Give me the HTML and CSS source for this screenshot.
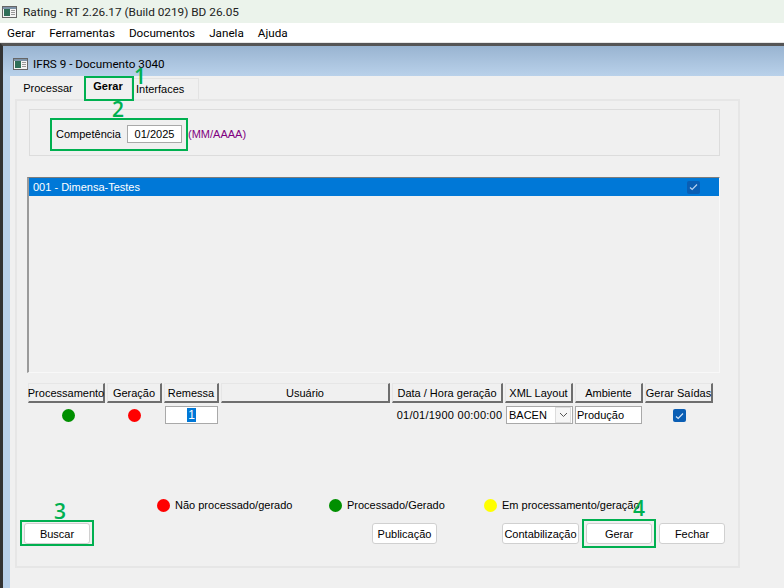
FILE: index.html
```html
<!DOCTYPE html>
<html lang="pt">
<head>
<meta charset="utf-8">
<title>Rating</title>
<link rel="stylesheet" href="styles.css">
</head>
<body>
<header class="titlebar">
  <svg class="appicon" width="15" height="12" viewBox="0 0 15 12"><rect x="0.5" y="0.5" width="14" height="11" fill="#f4f4f4" stroke="#666"/><rect x="1" y="1" width="13" height="2" fill="#7d93a8"/><rect x="2" y="3" width="6" height="7" fill="#2f6f58"/><rect x="9" y="4" width="4" height="1" fill="#999"/><rect x="9" y="6" width="4" height="1" fill="#999"/><rect x="9" y="8" width="4" height="1" fill="#999"/></svg>
  <span>Rating - RT 2.26.17 (Build 0219) BD 26.05</span>
</header>
<nav class="menubar">
  <span>Gerar</span><span>Ferramentas</span><span>Documentos</span><span>Janela</span><span>Ajuda</span>
</nav>
<main class="mdi">
  <section class="window">
    <div class="wintitle">
      <svg class="appicon" width="15" height="12" viewBox="0 0 15 12"><rect x="0.5" y="0.5" width="14" height="11" fill="#f4f4f4" stroke="#666"/><rect x="1" y="1" width="13" height="2" fill="#7d93a8"/><rect x="2" y="3" width="6" height="7" fill="#2f6f58"/><rect x="9" y="4" width="4" height="1" fill="#999"/><rect x="9" y="6" width="4" height="1" fill="#999"/><rect x="9" y="8" width="4" height="1" fill="#999"/></svg>
      <span>IFRS 9 - Documento 3040</span>
    </div>
    <div class="winbody">
      <div class="tabs">
        <span class="tab first">Processar</span>
        <span class="tab active">Gerar</span>
        <span class="tab last">Interfaces</span>
      </div>
      <div class="panel">
        <div class="group">
          <span class="complabel">Competência</span>
          <span class="input compinput">01/2025</span>
          <span class="hint">(MM/AAAA)</span>
        </div>
        <div class="list">
          <div class="listrow">
            <span>001 - Dimensa-Testes</span>
            <span class="listcheck"><svg width="9" height="8" viewBox="0 0 9 8"><path d="M1 4.5 3.2 6.5 8 1.5" fill="none" stroke="#b9d2ee" stroke-width="1.2"/></svg></span>
          </div>
        </div>
        <div class="grid">
          <span class="th">Processamento</span>
          <span class="th">Geração</span>
          <span class="th">Remessa</span>
          <span class="th">Usuário</span>
          <span class="th">Data / Hora geração</span>
          <span class="th">XML Layout</span>
          <span class="th">Ambiente</span>
          <span class="th">Gerar Saídas</span>
          <span class="td"><i class="dot green procdot"></i></span>
          <span class="td"><i class="dot red"></i></span>
          <span class="td"><span class="input remessa"><b>1</b></span></span>
          <span class="td"></span>
          <span class="td date">01/01/1900 00:00:00</span>
          <span class="td end"><span class="input combo"><span>BACEN</span><span class="arrow"><svg width="9" height="6" viewBox="0 0 9 6"><path d="M1 1 4.5 4.5 8 1" fill="none" stroke="#555" stroke-width="1"/></svg></span></span></span>
          <span class="td start"><span class="input ambiente">Produção</span></span>
          <span class="td"><span class="check"><svg width="9" height="8" viewBox="0 0 9 8"><path d="M1 4.5 3.2 6.5 8 1.5" fill="none" stroke="#d5e6f8" stroke-width="1.2"/></svg></span></span>
        </div>
        <div class="legend">
          <span class="legitem first"><i class="dot red"></i>Não processado/gerado</span>
          <span class="legitem"><i class="dot green"></i>Processado/Gerado</span>
          <span class="legitem"><i class="dot yellow"></i>Em processamento/geração</span>
        </div>
        <div class="actions">
          <button class="btn buscar">Buscar</button>
          <button class="btn publicacao">Publicação</button>
          <button class="btn contab">Contabilização</button>
          <button class="btn gerar">Gerar</button>
          <button class="btn fechar">Fechar</button>
        </div>
      </div>
    </div>
  </section>
  <span class="mark box1"></span><span class="num n1">1</span>
  <span class="mark box2"></span><span class="num n2">2</span>
  <span class="mark box3"></span><span class="num n3">3</span>
  <span class="mark box4"></span><span class="num n4">4</span>
</main>
</body>
</html>
```
FILE: styles.css
```css
* { box-sizing: border-box; }
html, body { margin: 0; padding: 0; }
body {
  width: 784px; height: 588px; overflow: hidden; background: #f0f0f0;
  font-family: "Liberation Sans", Arial, sans-serif; font-size: 11px; color: #000;
}
.appicon { flex: none; }
.titlebar {
  height: 23px; background: #ebf3eb; display: flex; align-items: center; gap: 6px; padding-left: 2px;
  font-family: Roboto, sans-serif; font-size: 11.8px; color: #222;
}
.menubar {
  height: 19px; background: #fff; display: flex; align-items: center; gap: 14px; padding-left: 7px;
  font-family: Roboto, sans-serif; font-size: 11.7px;
}
.mdi {
  position: relative; height: 546px; background: #f0f0f0;
  border-top: 1px solid #e6e6e6;
}
.window { height: 545px; border-top: 3px solid #555; border-left: 3px solid #333; background: #b9d1ea; padding-left: 7px; }
.wintitle {
  height: 30px; margin-left: -7px; padding: 5px 0 0 10px; display: flex; align-items: center; gap: 5px;
  background: linear-gradient(#99b4d1, #b9d1ea);
  font-family: Roboto, sans-serif; font-size: 11.7px;
}
.winbody { background: #f0f0f0; height: 512px; padding: 0 0 0 5px; }
.tabs { height: 23px; display: flex; align-items: flex-end; }
.tab { height: 21px; padding-top: 4px; text-align: center; }
.tab.first { width: 66px; }
.tab.active { width: 50px; font-weight: bold; padding: 2px 0 0 4px; }
.tab.last { width: 68px; border: 1px solid #e3e3e3; border-bottom: 0; background: #f0f0f0; padding: 4px 0 0 4px; text-align: left; }
.panel {
  width: 725px; height: 469px; border: 2px solid #e6e6e6; padding: 8px 0 0 12px;
  display: flex; flex-direction: column;
}
.group {
  width: 691px; height: 47px; border: 1px solid #dcdcdc; display: flex; align-items: center; padding: 3px 0 0 26px;
}
.complabel { width: 71px; }
.input { display: inline-flex; align-items: center; background: #fff; border: 1px solid #a9a9a9; height: 18px; }
.compinput { width: 55px; justify-content: center; }
.hint { color: #800080; margin-left: 6px; }
.list {
  margin-top: 21px; margin-left: -2px; width: 693px; height: 196px;
  border: 1px solid #9a9a9a; border-top: 1px solid #7c7c7c; border-left-width: 2px; border-right: 1px solid #f8f8f8; border-bottom: 1px solid #f8f8f8;
  background: #f0f0f0;
}
.listrow {
  height: 18px; background: #0078d7; color: #fff; display: flex; align-items: center; justify-content: space-between;
  padding: 0 19px 0 4px;
}
.listcheck { width: 13px; height: 13px; border-radius: 2px; background: #0a5eb4; display: flex; align-items: center; justify-content: center; }
.grid {
  margin-top: 10px; margin-left: -1px; display: grid;
  grid-template-columns: 77px 55px 55px 169px 111px 68px 68px 68px; column-gap: 2px;
  grid-template-rows: 20px 18px; row-gap: 3px;
  width: 686px;
}
.th {
  background: #f0f0f0; border: 1px solid #e6e6e6; border-right: 2px solid #6e6e6e; border-bottom: 2px solid #6e6e6e;
  display: flex; align-items: center; justify-content: center; white-space: nowrap; line-height: 16px;
}
.td { display: flex; align-items: center; justify-content: center; white-space: nowrap; }
.td.end { justify-content: flex-end; }
.td.start { justify-content: flex-start; }
.td.date { letter-spacing: 0.25px; padding-left: 4px; }
.dot { display: inline-block; width: 13px; height: 13px; border-radius: 50%; }
.procdot { margin-left: 4px; }
.green { background: #008f00; }
.red { background: #ff0000; }
.yellow { background: #ffff00; }
.remessa { width: 53px; justify-content: center; font-size: 12px; }
.remessa b { font-weight: normal; background: #0078d7; color: #fff; padding: 0 1px; }
.combo { width: 67px; justify-content: space-between; padding-left: 2px; padding-right: 1px; }
.arrow { width: 16px; height: 16px; display: flex; align-items: center; justify-content: center; background: #f6f6f6; border: 1px solid #dcdcdc; }
.ambiente { width: 67px; padding-left: 1px; }
.check { width: 13px; height: 13px; border-radius: 2px; background: #0a5eb4; display: flex; align-items: center; justify-content: center; margin-top: 1px; }
.legend { margin-top: 73px; display: flex; padding-left: 128px; height: 16px; }
.legitem { display: flex; align-items: center; gap: 5px; white-space: nowrap; }
.legitem.first { width: 172px; }
.legitem:nth-child(2) { width: 155px; }
.actions { margin-top: 10px; margin-left: -5px; display: flex; height: 21px; }
.btn {
  font: inherit; color: #000; background: #fff; border: 1px solid #d0d0d0; border-radius: 3px; padding: 0; height: 21px; white-space: nowrap;
}
.buscar { width: 66px; }
.publicacao { width: 65px; margin-left: 282px; }
.contab { width: 77px; margin-left: 65px; }
.gerar { width: 66px; margin-left: 7px; }
.fechar { width: 66px; margin-left: 7px; }
.mark { position: absolute; border: 2px solid #00b050; }
.num { position: absolute; color: #00b050; font-size: 21px; font-weight: 600; line-height: 22px; font-family: "Open Sans", sans-serif; }
.box1 { left: 84px; top: 33px; width: 50px; height: 25px; }
.box2 { left: 50px; top: 75px; width: 138px; height: 33px; }
.box3 { left: 20px; top: 477px; width: 74px; height: 26px; }
.box4 { left: 582px; top: 476px; width: 74px; height: 29px; }
.n1 { left: 134px; top: 22px; }
.n2 { left: 112px; top: 55px; }
.n3 { left: 54px; top: 457px; }
.n4 { left: 633px; top: 454px; }
```
